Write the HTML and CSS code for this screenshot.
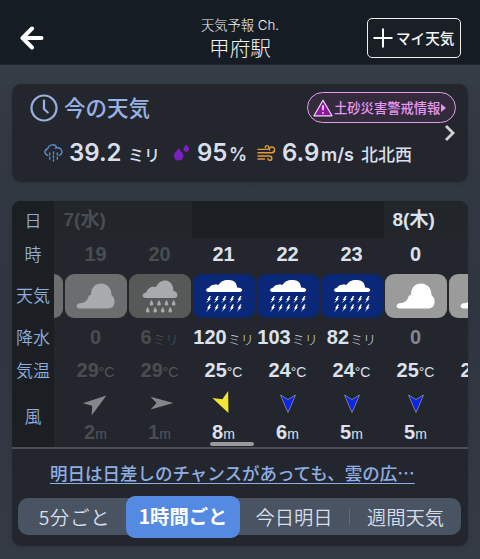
FILE: index.html
```html
<!DOCTYPE html>
<html lang="ja">
<head>
<meta charset="utf-8">
<title>天気予報 Ch.</title>
<link rel="stylesheet" href="styles.css">
</head>
<body>
<svg class="defs" width="0" height="0">
  <symbol id="cloud" viewBox="0 0 62 44"><path d="M15 34.500c-4.500 0-4.500-5 0-5.300C19 29 22 27 23 24c.5-2.500 2-3.200 3-3.200C26 14 30 9.500 36 9.500c6.500 0 10.500 5 10.500 11.500C51.500 25 50.500 34.500 43.500 34.500Z"/></symbol>
  <symbol id="rain" viewBox="0 0 62 44"><path d="M17 24c-4.500 0-4.500-5 0-5.500 2-5 6-6.500 10-5.500C31 4.500 41 4.500 43.500 12c1 2 .8 3.500.8 5C49 17 50 24 45.500 24Z"/><path d="M22.500 26q3.800 5.500 0 5.500t0-5.500m7.500 0q3.800 5.500 0 5.500t0-5.500m7.500 0q3.800 5.500 0 5.500t0-5.500m7.200 0q3.800 5.500 0 5.500t0-5.500M18.700 33q3.800 5.500 0 5.500t0-5.500m7.500 0q3.800 5.500 0 5.500t0-5.500m7.500 0q3.800 5.500 0 5.500t0-5.500m7.500 0q3.800 5.500 0 5.500t0-5.500"/></symbol>
  <symbol id="storm" viewBox="0 0 62 44"><path d="M15.500 18c-4-.5-2.500-4 .5-4.300C18 10.500 22 10 25.500 11 29 6 32 6 36 6c5 0 8 3 8 7.500 7 0 6 4.500 3 4.500Z"/><path id="bolts" d="m16.500 22-2.500 4h1.300l-2.300 3.500 5-4.700h-1.400l1.400-2.800Zm7.700 0-2.500 4H23l-2.300 3.500 5-4.700h-1.400l1.400-2.800Zm7.600 0-2.500 4h1.300l-2.300 3.500 5-4.700h-1.400l1.400-2.800Zm7.700 0-2.500 4h1.300L36 29.500l5-4.700h-1.400L41 22Zm7.600 0-2.500 4h1.300l-2.300 3.500 5-4.700h-1.400l1.400-2.800Z"/><use href="#bolts" y="8.500"/></symbol>
  <symbol id="arrow" viewBox="-12 -12 24 24"><path d="M0 9.500-7.500-8 0-3.500 7.500-8Z"/></symbol>
</svg>

<header class="header">
  <svg class="back" viewBox="0 0 24 24"><path d="M12 2.500 2.500 12l9.500 9.500M3 12H21.500"/></svg>
  <div class="title"><small>天気予報 Ch.</small><h1>甲府駅</h1></div>
  <div class="add"><svg viewBox="0 0 20 20"><path d="M10 .5v19M.5 10h19"/></svg><span>マイ天気</span></div>
</header>

<main>
  <section class="card now">
    <div class="now-head">
      <svg class="clock" viewBox="0 0 28 28"><circle cx="14" cy="14" r="12.500"/><path d="M14 6.500V15l3.800 3.500"/></svg>
      <h2>今の天気</h2>
      <div class="alert">
        <svg viewBox="0 0 20 18"><path d="M10 1.200 19 16.800H1Z"/><path class="mark" d="M10 6.300v5M10 13.200v1.500"/></svg>
        <span>土砂災害警戒情報</span><i></i>
      </div>
    </div>
    <div class="stats">
      <svg class="s-rain" viewBox="0 0 20 20"><path d="M4 13C0 12 0 7 4 6c1-5 8-5.500 9.500-1 6-.5 7 7 2.500 8M12 5.300l2-.3"/><path d="M6 10.500v2M10 9.500v2M14 10.500v2M6 15v2M10 13.500v2M14 15v2M10 17.500v1.500"/></svg>
      <b class="v-rain">39.2</b><span class="u-rain">ミリ</span>
      <svg class="s-drop" viewBox="0 0 18 18"><path d="M6 4.500C3 8.500 1 10 1 12.500a4.900 4.900 0 0 0 10 0C11 10 9 8.500 6 4.500ZM14 .5c-1.500 2-3 3.200-3 4.700a3 3 0 0 0 6 0c0-1.500-1.500-2.700-3-4.700Z"/></svg>
      <b class="v-hum">95</b><span class="u-hum">%</span>
      <svg class="s-wind" viewBox="0 0 20 18"><path d="M1 5.200h9.500c3 0 2.500-4 .2-4-1.500 0-2 1-1.800 2M1 8.700h14.500c4 0 4-6 .2-6-2 0-3 1.500-2.500 3M1 12.200h11.500c4.500 0 3.500 4.500 1 4.500-1.500 0-2-.8-1.800-1.800M1 15.300h7"/></svg>
      <b class="v-wind">6.9</b><span class="u-wind">m/s</span><span class="dir">北北西</span>
    </div>
    <svg class="chevron" viewBox="0 0 12 18"><path d="m2 2 7 7-7 7"/></svg>
  </section>

  <section class="card forecast">
    <div class="table">
      <div class="labels"><span class="date">日</span><span class="hour">時</span><span class="sky">天気</span><span class="precip">降水</span><span class="temp">気温</span><span class="windl">風</span></div>
      <div class="scroller">
        <div class="col first past"><div class="date day"></div><div class="hour"></div><div class="sky"><div class="tile gray"></div></div></div>
        <div class="col past"><div class="date day flush">7(水)</div><div class="hour">19</div><div class="sky"><div class="tile gray"><svg><use href="#cloud"/></svg></div></div><div class="precip">0</div><div class="temp">29<small>°C</small></div><div class="arrow"><svg class="ne"><use href="#arrow"/></svg></div><div class="speed">2<small>m</small></div></div>
        <div class="col past"><div class="date day"></div><div class="hour">20</div><div class="sky"><div class="tile dark"><svg><use href="#rain"/></svg></div></div><div class="precip">6<small class="mm">ミリ</small></div><div class="temp">29<small>°C</small></div><div class="arrow"><svg class="e"><use href="#arrow"/></svg></div><div class="speed">1<small>m</small></div></div>
        <div class="col"><div class="date"></div><div class="hour">21</div><div class="sky"><div class="tile blue"><svg><use href="#storm"/></svg></div></div><div class="precip">120<small class="mm">ミリ</small></div><div class="temp">25<small>°C</small></div><div class="arrow"><svg class="yellow"><use href="#arrow"/></svg></div><div class="speed">8<small>m</small></div></div>
        <div class="col"><div class="date"></div><div class="hour">22</div><div class="sky"><div class="tile blue"><svg><use href="#storm"/></svg></div></div><div class="precip">103<small class="mm">ミリ</small></div><div class="temp">24<small>°C</small></div><div class="arrow"><svg><use href="#arrow"/></svg></div><div class="speed">6<small>m</small></div></div>
        <div class="col"><div class="date"></div><div class="hour">23</div><div class="sky"><div class="tile blue"><svg><use href="#storm"/></svg></div></div><div class="precip">82<small class="mm">ミリ</small></div><div class="temp">24<small>°C</small></div><div class="arrow"><svg><use href="#arrow"/></svg></div><div class="speed">5<small>m</small></div></div>
        <div class="col"><div class="date day">8(木)</div><div class="hour">0</div><div class="sky"><div class="tile light"><svg><use href="#cloud"/></svg></div></div><div class="precip none">0</div><div class="temp">25<small>°C</small></div><div class="arrow"><svg><use href="#arrow"/></svg></div><div class="speed">5<small>m</small></div></div>
        <div class="col"><div class="date day"></div><div class="hour"></div><div class="sky"><div class="tile light"><svg><use href="#cloud"/></svg></div></div><div class="precip"></div><div class="temp next">2</div></div>
        <div class="thumb"></div>
      </div>
    </div>
    <p class="comment"><a>明日は日差しのチャンスがあっても、雲の広…</a></p>
    <nav class="tabs"><span class="t1">5分ごと</span><span class="t2 active">1時間ごと</span><span class="t3">今日明日</span><i></i><span class="t4">週間天気</span></nav>
  </section>
</main>
</body>
</html>
```
FILE: styles.css
```css
* { box-sizing: border-box; }
body { margin: 0; width: 480px; height: 559px; overflow: hidden; background: linear-gradient(#373d46 65px, #333942 130px, #303641 320px, #353b44 559px); color: #dce1ee; font-family: "Liberation Sans", "Noto Sans CJK JP", sans-serif; white-space: nowrap; }
svg { display: block; flex: none; }
.defs { position: absolute; }
h1, h2, p { margin: 0; }

.header { display: flex; align-items: flex-start; height: 65px; background: #161c23; color: #f2f4f6; border-bottom: 1px solid #20262d; }
.back { width: 24px; height: 24px; margin: 26px 0 0 20px; fill: none; stroke: #fff; stroke-width: 4; stroke-linecap: round; stroke-linejoin: round; }
.title { width: 200px; margin: 17px 0 0 96px; text-align: center; font-family: Inter, "Noto Sans CJK JP", sans-serif; }
.title small { display: block; font-size: 13.300px; line-height: 17px; font-weight: 300; }
.title h1 { font-size: 20.700px; line-height: 30px; font-weight: 300; }
.add { display: flex; align-items: center; width: 94px; height: 40px; margin: 18px 0 0 27px; padding-left: 5px; gap: 3px; border: 1.500px solid #eee; border-radius: 5px; font-family: "Noto Sans CJK JP", sans-serif; font-weight: 500; font-size: 14.600px; background: #1a1f25; }
.add svg { width: 20px; height: 20px; stroke: #fff; stroke-width: 2; }
.add span { padding-bottom: 2px; }

main { display: flex; flex-direction: column; gap: 19px; padding: 19px 12px 0 12px; }
.card { border-radius: 9px; background: #23272d; overflow: hidden; box-shadow: 0 1px 5px #282e3788; }

.now { position: relative; height: 98px; padding-left: 18px; font-family: Inter, "Noto Sans CJK JP", sans-serif; }
.now-head { display: flex; align-items: flex-start; height: 52px; }
.clock { width: 28px; height: 28px; margin-top: 10px; fill: none; stroke: #98b1df; stroke-width: 2.200; stroke-linecap: round; }
h2 { width: 92px; margin: 8px 0 0 6px; font-size: 21.500px; line-height: 32px; font-weight: 500; color: #98b1e6; }
.alert { display: flex; align-items: center; width: 149px; height: 31px; margin: 8px 0 0 151px; padding-left: 5px; border: 1px solid #e69bf0; border-radius: 16px; background: #332b3c; color: #e898f4; }
.alert svg { width: 20px; height: 18px; fill: #8d169e; stroke: #f6d7f8; stroke-width: 1.200; stroke-linejoin: round; }
.alert .mark { stroke: #fff; stroke-width: 1.500; }
.alert span { width: 106px; margin-left: 1px; font-size: 13.300px; font-weight: 500; }
.alert i { margin-left: 1px; border: solid transparent; border-width: 4px 0 4px 5px; border-left-color: #e898f4; }
.stats { display: flex; align-items: baseline; height: 34px; line-height: 34px; color: #d9dfec; }
.stats svg { align-self: flex-start; fill: none; stroke-width: 1.500; stroke-linecap: round; stroke-linejoin: round; }
.stats b { font-size: 24px; font-weight: 600; }
.s-rain { width: 19px; height: 19px; margin: 7px 0 0 14px; stroke: #568bcd; }
.v-rain { width: 54px; margin-left: 6px; }
.u-rain { width: 30px; margin-left: 5px; font-size: 16px; font-weight: 500; }
.stats .s-drop { width: 17px; height: 17px; margin: 8px 0 0 15px; fill: #7920bd; }
.v-hum { width: 32px; margin-left: 7px; }
.u-hum { width: 19px; font-size: 18px; font-weight: 600; }
.s-wind { width: 19px; height: 18px; margin: 8px 0 0 9px; stroke: #e19a3c; }
.v-wind { width: 38px; margin-left: 6px; }
.u-wind { width: 33px; margin-left: 1px; font-size: 18px; font-weight: 600; }
.dir { margin-left: 7px; font-size: 17px; font-weight: 500; }
.chevron { position: absolute; right: 12px; top: 40px; width: 12px; height: 18px; fill: none; stroke: #d0d2d4; stroke-width: 2.800; }

.forecast { height: 345px; }
.table { display: flex; height: 248px; border-bottom: 2px solid #4c4e55; }
.labels { width: 42px; flex: none; display: flex; flex-direction: column; text-align: center; background: #1b1f24; color: #8faddd; font-family: "Noto Sans CJK JP", sans-serif; font-size: 17px; font-weight: 350; }
.labels span { display: block; }
.date { height: 37px; line-height: 37px; background: #1b1f23; }
.day { background: #22262b; padding-left: 9px; }
.hour { height: 33px; line-height: 32px; }
.labels .hour { line-height: 31px; }
.sky { height: 50px; padding-top: 3px; }
.labels .sky { line-height: 42px; }
.precip { height: 33px; line-height: 33px; }
.labels .precip { line-height: 32px; }
.temp { height: 33px; line-height: 33px; }
.labels .temp { line-height: 31px; }
.labels .windl { line-height: 58px; }
.scroller { position: relative; display: flex; flex: 1; min-width: 0; overflow: hidden; font-size: 20px; font-weight: 700; text-align: center; background: #23262c; }
.col { width: 64px; flex: none; }
.first { margin-left: -54.500px; }
.scroller .date { text-align: left; font-size: 19px; }
.scroller .flush { padding-left: 0; }
.scroller small { font-size: 14px; font-weight: 400; }
.scroller .mm { font-size: 13px; font-weight: 300; margin-left: 1px; }
.scroller .next { text-align: left; padding-left: 13px; }
.tile { width: 62px; height: 44px; margin: 0 auto; border-radius: 9px; fill: #fff; overflow: hidden; }
.tile svg { width: 62px; height: 44px; }
.gray { background: #6b6e6e; fill: #a7abae; }
.dark { background: #555958; fill: #a7abae; }
.blue { background: #0b2777; }
.light { background: #9b9b9b; }
.past { color: #494c51; }
.past small { color: #53565b; }
.none { color: #82868e; }
.arrow { height: 30px; padding-top: 4px; }
.arrow svg { width: 24px; height: 24px; margin: 0 auto; fill: #0f25e4; stroke: #8793a8; stroke-width: .8; overflow: visible; }
.arrow .ne, .arrow .e { fill: #83868a; stroke: none; transform: translateX(1px) rotate(-90deg) scale(.85, 1.300); }
.arrow .ne { transform: rotate(-126deg) scale(1, 1.350); }
.arrow .yellow { fill: #f5e532; stroke: none; transform: rotate(-24deg) scale(1.150); }
.speed { height: 29px; line-height: 30px; }
.thumb { position: absolute; left: 156px; bottom: 1px; width: 44px; height: 4px; border-radius: 2px; background: #98999b; }

.comment { height: 46px; padding: 8px 0 0 38px; color: #8faee5; font-family: "Noto Sans CJK JP", sans-serif; font-size: 17.500px; line-height: 32px; font-weight: 500; }
.comment a { text-decoration: underline; text-decoration-thickness: 1px; text-underline-offset: 3px; }
.tabs { display: flex; align-items: center; width: 443px; height: 37px; margin: 3px 0 0 6px; border-radius: 10px; background: #495362; color: #d8dfea; font-family: "Noto Sans CJK JP", sans-serif; font-size: 19.300px; font-weight: 350; text-align: center; }
.t1 { width: 108px; padding-left: 5px; letter-spacing: .8px; }
.t2 { width: 114px; height: 42px; line-height: 41px; border-radius: 9px; background: #558ae2; color: #fff; font-weight: 700; }
.t3 { width: 108px; }
.tabs i { width: 1px; height: 17px; margin-left: 1px; background: #616a77; }
.t4 { width: 111px; }
```
